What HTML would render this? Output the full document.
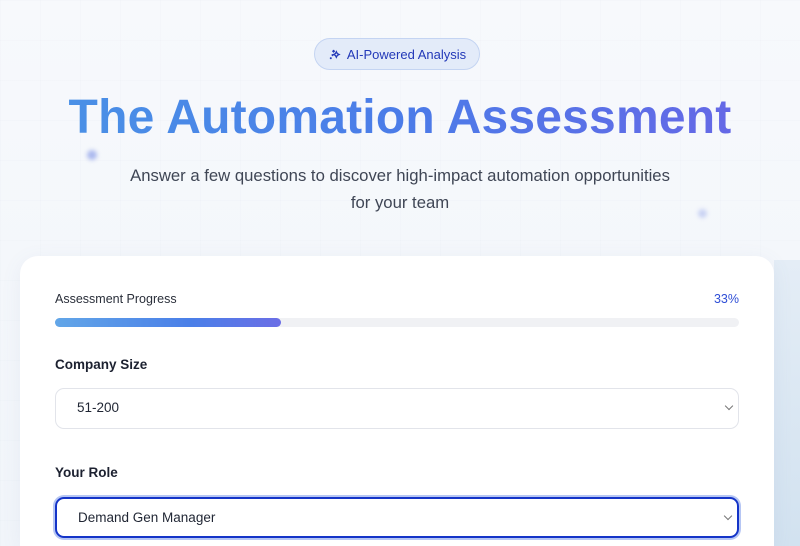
<!DOCTYPE html>
<html><head><meta charset="utf-8"><style>
*{margin:0;padding:0;box-sizing:border-box}
html,body{width:800px;height:546px;overflow:hidden}
body{font-family:"Liberation Sans",sans-serif;background:linear-gradient(180deg,#f7f9fc,#f1f5fa);position:relative}
.grid{position:absolute;inset:0;background-image:linear-gradient(rgba(200,210,230,.07) 1px,transparent 1px),linear-gradient(90deg,rgba(200,210,230,.07) 1px,transparent 1px);background-size:40px 40px}
.side{position:absolute;left:774px;top:260px;width:26px;height:286px;background:linear-gradient(180deg,#e4edf6,#d2e2f0)}
.dot{position:absolute;border-radius:50%;background:#aab8ee;filter:blur(2px)}
.badge{position:absolute;left:314px;top:38px;width:166px;height:32px;border:1px solid #c4d4f2;background:#e3ebf9;border-radius:16px;color:#2238b8;font-size:13px;display:flex;align-items:center;justify-content:center;gap:6px}
h1{position:absolute;left:0;width:800px;top:90px;text-align:center;font-size:48px;font-weight:bold;background:linear-gradient(90deg,#4a94e6,#4b7ce8 50%,#6a64e6);-webkit-background-clip:text;color:transparent;letter-spacing:0.2px}
.sub{position:absolute;left:0;width:800px;top:162px;text-align:center;font-size:16.7px;line-height:27px;color:#3f4655}
.card{position:absolute;left:20px;top:256px;width:754px;height:290px;background:#fff;border-radius:18px 18px 0 0;box-shadow:0 4px 20px rgba(100,120,160,.08)}
.lbl{position:absolute;font-size:12.5px;color:#2a2f3a}
.pct{position:absolute;right:35px;top:36px;font-size:12.5px;color:#2e4ed6}
.track{position:absolute;left:35px;top:62px;width:684px;height:9px;background:#f0f1f4;border-radius:5px}
.fill{width:226px;height:9px;border-radius:5px;background:linear-gradient(90deg,#62a6e8,#4a7fe8 60%,#6b6ee6)}
.fl{position:absolute;left:35px;font-size:13.5px;font-weight:bold;color:#1c2130}
.sel{position:absolute;left:35px;width:684px;height:41px;border:1.5px solid #e2e4ea;border-radius:9px;font-size:13.5px;color:#1f2533;padding-left:21px;line-height:38px}
.sel:after{content:"";position:absolute;right:6px;top:14px;width:5px;height:5px;border-right:1px solid #777;border-bottom:1px solid #777;transform:rotate(45deg)}
.act{border:2px solid #1434c8;box-shadow:0 0 0 2px #b6c6f4}
</style></head><body>
<div class="grid"></div>
<div class="side"></div>
<div class="dot" style="left:87px;top:150px;width:10px;height:10px"></div>
<div class="dot" style="left:698px;top:209px;width:9px;height:9px;opacity:.6"></div>
<div class="badge"><svg width="13" height="13" viewBox="0 0 14 14" fill="none" stroke="#2238b8" stroke-width="1.4"><path d="M6 2v3M4.5 3.5h3M4 7l1.5 1.5M9 4l1 2 2 1-2 1-1 2-1-2-2-1 2-1z"/><path d="M3 10v2M2 11h2"/></svg>AI-Powered Analysis</div>
<h1>The Automation Assessment</h1>
<div class="sub">Answer a few questions to discover high-impact automation opportunities<br>for your team</div>
<div class="card">
<div class="lbl" style="left:35px;top:36px">Assessment Progress</div>
<div class="pct">33%</div>
<div class="track"><div class="fill"></div></div>
<div class="fl" style="top:101px">Company Size</div>
<div class="sel" style="top:132px">51-200</div>
<div class="fl" style="top:209px">Your Role</div>
<div class="sel act" style="top:241px">Demand Gen Manager</div>
</div>
</body></html>
